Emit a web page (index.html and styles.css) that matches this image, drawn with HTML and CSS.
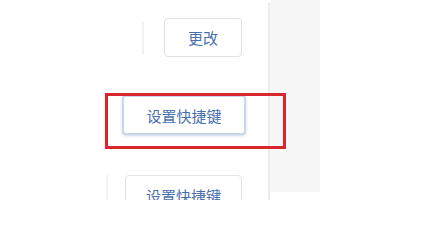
FILE: index.html
```html
<!DOCTYPE html>
<html lang="zh-CN">
<head>
  <meta charset="UTF-8" />
  <title>设置快捷键</title>
  <link rel="stylesheet" href="styles.css">
</head>
<body>
  <div class="page">
    <div class="cont-left">
      <div class="row row-first">
        <span class="edge edge-a"></span>
        <button class="btn btn-small">更改</button>
      </div>
      <div class="row row-second">
        <button class="btn btn-focus">设置快捷键</button>
      </div>
      <div class="row row-third">
        <span class="edge edge-b"></span>
        <button class="btn btn-third">设置快捷键</button>
      </div>
    </div>
    <div class="divider"></div>
    <div class="side-panel"></div>
  </div>
  <div class="highlight"></div>
</body>
</html>
```

FILE: styles.css
```css
* {
  margin: 0;
  padding: 0;
  box-sizing: border-box;
}

body {
  margin: 0;
  background: #fff;
  font-family: "Noto Sans CJK SC", "Noto Sans", sans-serif;
  position: relative;
  width: 423px;
  height: 229px;
  overflow: hidden;
}

.page {
  display: flex;
  flex-direction: row;
  height: 200px;
  overflow: hidden;
}

.cont-left {
  width: 268px;
  display: flex;
  flex-direction: column;
}

.row {
  display: flex;
  position: relative;
  flex-shrink: 0;
}

.row-first { height: 95px; padding-top: 18px; padding-left: 164px; }
.row-second { height: 80px; padding-left: 122px; }
.row-third { padding-left: 125px; }

.edge {
  position: absolute;
  width: 2px;
  background: #f1f1f1;
}
.edge-a { left: 142px; top: 22px; height: 32px; }
.edge-b { left: 106px; top: 0; height: 30px; }

.btn {
  font-family: inherit;
  font-size: 15px;
  color: #4a6fae;
  background: #fff;
  border: 1px solid #dfe1e6;
  border-radius: 4px;
  height: 39px;
  display: flex;
  align-items: center;
  justify-content: center;
}

.btn-small { width: 78px; }

.btn-focus {
  width: 124px;
  height: 40px;
  border: 2px solid #c9d6ea;
  box-shadow: 0 1px 3px rgba(80, 110, 160, 0.25);
}

.btn-third {
  width: 117px;
  height: 40px;
  border-color: #e3e3e3;
}

.divider {
  width: 2px;
  height: 200px;
  margin-top: 3px;
  background: #ececec;
}

.side-panel {
  width: 50px;
  height: 192px;
  background: #f7f7f7;
}

.highlight {
  position: absolute;
  left: 105px;
  top: 93px;
  width: 181px;
  height: 56px;
  border: 3px solid #d9262e;
}
```
